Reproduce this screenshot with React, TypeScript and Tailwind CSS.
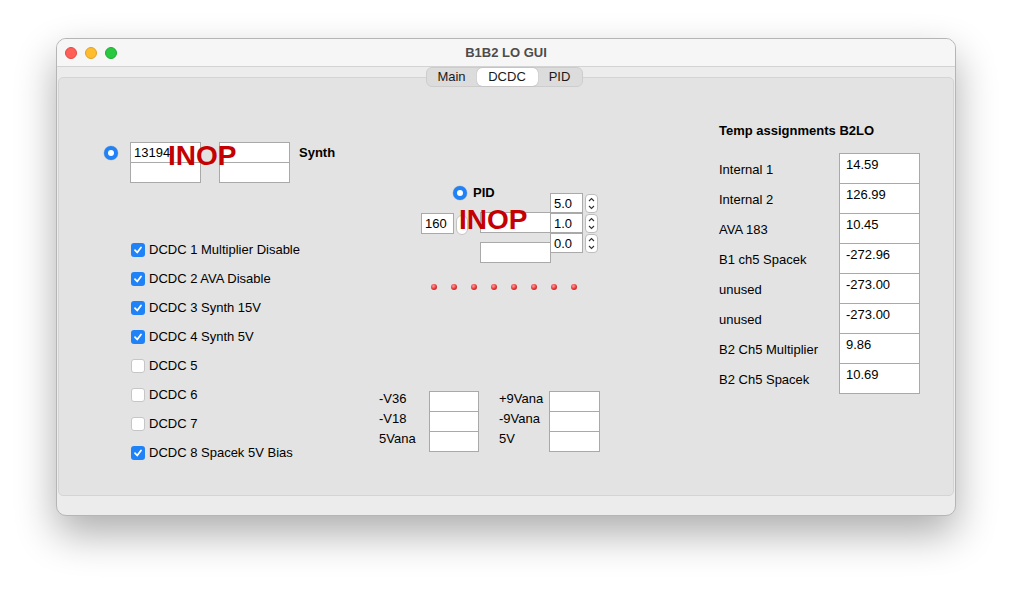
import React from "react";

const font = { fontFamily: '"Liberation Sans", Arial, sans-serif' };

const Field = ({ value = "", className = "" }: { value?: string; className?: string }) => (
  <div
    className={`bg-white border border-[#a9a9a9] text-[13px] leading-[16px] text-black pl-[3px] pt-[2px] ${className}`}
  >
    {value}
  </div>
);

const Radio = () => (
  <div className="w-[14px] h-[14px] rounded-full bg-[#1f83f7] flex items-center justify-center shadow-[0_0_0_0.5px_rgba(0,0,0,0.15)]">
    <div className="w-[6px] h-[6px] rounded-full bg-white" />
  </div>
);

const Stepper = () => (
  <div className="w-[13px] h-[19px] rounded-[4px] bg-white border border-[#bdbdbd] flex flex-col items-center justify-center">
    <svg width="7" height="15" viewBox="0 0 7 15">
      <path d="M1 5 L3.5 2.5 L6 5" fill="none" stroke="#333" strokeWidth="1.1" />
      <path d="M1 10 L3.5 12.5 L6 10" fill="none" stroke="#333" strokeWidth="1.1" />
    </svg>
  </div>
);

const Check = ({ on }: { on: boolean }) =>
  on ? (
    <div className="w-[14px] h-[14px] rounded-[3px] bg-[#1f83f7] flex items-center justify-center">
      <svg width="10" height="10" viewBox="0 0 10 10">
        <path d="M2 5.2 L4.2 7.5 L8 2.5" fill="none" stroke="white" strokeWidth="1.8" strokeLinecap="round" strokeLinejoin="round" />
      </svg>
    </div>
  ) : (
    <div className="w-[14px] h-[14px] rounded-[3px] bg-white border border-[#c6c6c6]" />
  );

const Inop = ({ className }: { className: string }) => (
  <div className={`absolute text-[28px] font-bold leading-none text-[#c40000] pointer-events-none ${className}`}>
    INOP
  </div>
);

const checks: [string, boolean][] = [
  ["DCDC 1 Multiplier Disable", true],
  ["DCDC 2 AVA Disable", true],
  ["DCDC 3 Synth 15V", true],
  ["DCDC 4 Synth 5V", true],
  ["DCDC 5", false],
  ["DCDC 6", false],
  ["DCDC 7", false],
  ["DCDC 8 Spacek 5V Bias", true],
];

const temps: [string, string][] = [
  ["Internal 1", "14.59"],
  ["Internal 2", "126.99"],
  ["AVA 183", "10.45"],
  ["B1 ch5 Spacek", "-272.96"],
  ["unused", "-273.00"],
  ["unused", "-273.00"],
  ["B2 Ch5 Multiplier", "9.86"],
  ["B2 Ch5 Spacek", "10.69"],
];

const volts: [string, string][] = [
  ["-V36", "+9Vana"],
  ["-V18", "-9Vana"],
  ["5Vana", "5V"],
];

export default function App() {
  return (
    <div className="w-[1012px] h-[590px] bg-white pt-[38px] pl-[56px]" style={font}>
      <div className="w-[900px] h-[478px] rounded-[10px] bg-[#ececec] border border-[#b5b5b5] shadow-[0_18px_40px_rgba(0,0,0,0.32)] overflow-hidden flex flex-col">
        {/* title bar */}
        <div className="h-[28px] bg-[#f6f6f6] border-b border-[#d3d3d3] flex items-center relative shrink-0">
          <div className="flex gap-[8px] pl-[8px]">
            <div className="w-[12px] h-[12px] rounded-full bg-[#ff5f57] border border-[#e14942]" />
            <div className="w-[12px] h-[12px] rounded-full bg-[#febc2e] border border-[#dfa123]" />
            <div className="w-[12px] h-[12px] rounded-full bg-[#28c840] border border-[#1eab35]" />
          </div>
          <div className="flex-1 text-center text-[13px] font-bold text-[#4c4c4c] pr-[60px]">B1B2 LO GUI</div>
        </div>

        {/* tabs */}
        <div className="flex justify-center relative z-10 mb-[-10px] pr-[4px]">
          <div className="flex h-[20px] bg-[#dcdcdc] border border-[#cdcdcd] rounded-[6px] text-[13px] text-[#1a1a1a]">
            <div className="w-[50px] flex items-center justify-center">Main</div>
            <div className="w-[61px] flex items-center justify-center bg-white rounded-[5px] shadow-[0_0_1px_rgba(0,0,0,0.4)]">DCDC</div>
            <div className="w-[44px] flex items-center justify-center">PID</div>
          </div>
        </div>

        {/* panel */}
        <div className="mx-[1px] h-[419px] bg-[#e3e3e3] border border-[#d4d4d4] rounded-[5px] flex text-[13px] text-black">
          {/* column 1 */}
          <div className="w-[320px] pl-[45px] pt-[64px]">
            <div className="flex relative">
              <div className="mt-[4px] mr-[12px]">
                <Radio />
              </div>
              <div className="flex flex-col">
                <Field value="13194" className="w-[71px] h-[21px]" />
                <Field className="w-[71px] h-[21px] mt-[-1px]" />
              </div>
              <div className="flex flex-col ml-[18px]">
                <Field className="w-[71px] h-[21px]" />
                <Field className="w-[71px] h-[21px] mt-[-1px]" />
              </div>
              <div className="ml-[9px] mt-[1px] font-bold">Synth</div>
              <Inop className="left-[64px] top-[0px]" />
            </div>
            <div className="mt-[52px] ml-[27px] flex flex-col">
              {checks.map(([label, on], i) => (
                <div key={i} className="h-[29px] flex items-center gap-[4px]">
                  <Check on={on} />
                  <span>{label}</span>
                </div>
              ))}
            </div>
          </div>

          {/* column 2 */}
          <div className="w-[340px] pt-[106px]">
            <div className="flex ml-[42px] relative">
              <div className="flex flex-col w-[129px]">
                <div className="h-[17px] flex items-center pl-[32px] gap-[6px]">
                  <Radio />
                  <span className="font-bold">PID</span>
                </div>
                <div className="flex mt-[11px]">
                  <div className="flex items-start mt-[1px]">
                    <Field value="160" className="w-[33px] h-[21px]" />
                    <div className="ml-[2px] mt-[2px] w-[12px] h-[20px] rounded-full bg-white border border-[#c4c4c4]" />
                  </div>
                  <div className="flex flex-col ml-[12px]">
                    <Field className="w-[71px] h-[21px]" />
                    <Field className="w-[71px] h-[21px] mt-[9px]" />
                  </div>
                </div>
              </div>
              <div className="flex flex-col mt-[9px]">
                {["5.0", "1.0", "0.0"].map((v, i) => (
                  <div key={i} className="flex items-center h-[20px]">
                    <Field value={v} className="w-[33px] h-[20px] pt-[1px]" />
                    <div className="ml-[2px]">
                      <Stepper />
                    </div>
                  </div>
                ))}
              </div>
              <Inop className="left-[38px] top-[22px]" />
            </div>

            <div className="flex gap-[14px] ml-[52px] mt-[21px]">
              {Array.from({ length: 8 }).map((_, i) => (
                <div
                  key={i}
                  className="w-[6px] h-[6px] rounded-full bg-[radial-gradient(circle_at_40%_35%,#ff9a9a,#e02a2a_60%,#b51a1a)]"
                />
              ))}
            </div>

            <div className="mt-[101px] grid grid-cols-[50px_50px_70px_51px]">
              {volts.map(([a, b], i) => (
                <React.Fragment key={i}>
                  <div className="h-[20px] leading-[16px]">{a}</div>
                  <Field className="h-[21px] mb-[-1px]" />
                  <div className="h-[20px] leading-[16px] pl-[20px]">{b}</div>
                  <Field className="h-[21px] mb-[-1px]" />
                </React.Fragment>
              ))}
            </div>
          </div>

          {/* column 3 */}
          <div className="pt-[45px]">
            <div className="font-bold h-[16px] leading-[16px]">Temp assignments B2LO</div>
            <div className="mt-[14px] grid grid-cols-[120px_81px]">
              {temps.map(([l, v], i) => (
                <React.Fragment key={i}>
                  <div className="h-[30px] flex items-center pt-[4px]">{l}</div>
                  <Field value={v} className={`h-[31px] pl-[6px] pt-[3px] ${i < temps.length - 1 ? "mb-[-1px]" : ""}`} />
                </React.Fragment>
              ))}
            </div>
          </div>
        </div>
      </div>
    </div>
  );
}
